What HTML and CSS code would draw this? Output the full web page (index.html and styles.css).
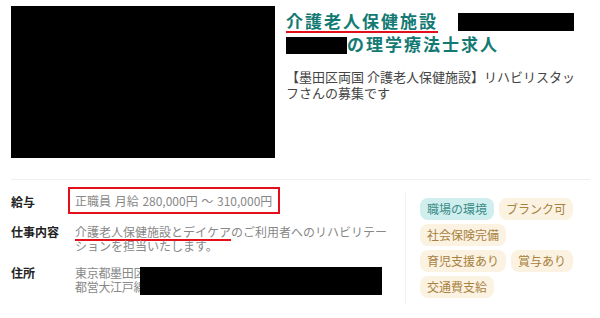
FILE: index.html
```html
<!DOCTYPE html>
<html lang="ja">
<head>
  <meta charset="UTF-8">
  <meta name="viewport" content="width=device-width, initial-scale=1.0">
  <title>介護老人保健施設 理学療法士求人</title>
  <link rel="stylesheet" href="styles.css">
</head>
<body>

<div class="job-card">
  <div class="job-top">
    <div class="job-photo"></div>
    <div class="job-head">
      <h1 class="job-title">
        <span class="mark-red">介護老人保健施設</span><span class="redact redact-a"></span><br><span class="redact redact-b"></span>の理学療法士求人
      </h1>
      <p class="job-lead">【墨田区両国 介護老人保健施設】リハビリスタッフさんの募集です</p>
    </div>
  </div>

  <div class="job-bottom">
    <dl class="spec">
      <dt class="spec-label label-mid">給与</dt>
      <dd class="spec-value"><span class="salary-box">正職員 月給 280,000円 ～ 310,000円</span></dd>

      <dt class="spec-label">仕事内容</dt>
      <dd class="spec-value text-plain job-text"><span class="mark-line">介護老人保健施設とデイケア</span>のご利用者へのリハビリテーションを担当いたします。</dd>

      <dt class="spec-label row-addr">住所</dt>
      <dd class="spec-value text-plain address row-addr">
        <span class="addr-line">東京都墨田区</span>
        <span class="addr-line">都営大江戸線</span>
        <span class="redact redact-addr"></span>
      </dd>
    </dl>

    <div class="tags">
      <span class="tag tag-teal">職場の環境</span>
      <span class="tag">ブランク可</span>
      <span class="tag">社会保険完備</span>
      <span class="tag">育児支援あり</span>
      <span class="tag">賞与あり</span>
      <span class="tag">交通費支給</span>
    </div>
  </div>
</div>

</body>
</html>
```

FILE: styles.css
```css
* {
  margin: 0;
  padding: 0;
  box-sizing: border-box;
}

body {
  font-family: "Noto Sans CJK JP", "Noto Sans", sans-serif;
  background: #fff;
  color: #222;
  padding: 6px 10px 0 11px;
}

.job-top {
  display: flex;
  gap: 11px;
}

.job-photo {
  width: 264px;
  height: 152px;
  background: #000;
  flex-shrink: 0;
}

.job-head {
  flex: 1;
  padding-right: 8px;
}

.job-title {
  margin-top: 3px;
  font-size: 17px;
  line-height: 23px;
  letter-spacing: 2px;
  font-weight: bold;
  color: #127a73;
}

.mark-red {
  text-decoration: underline #e3101c;
  text-decoration-thickness: 2px;
  text-underline-offset: 3px;
}

.redact {
  display: inline-block;
  background: #000;
}

.redact-a {
  width: 116px;
  height: 18px;
  margin-left: 20px;
  vertical-align: -3px;
}

.redact-b {
  width: 61px;
  height: 17px;
  vertical-align: -3px;
}

.job-lead {
  margin-top: 14px;
  font-size: 13px;
  line-height: 16px;
  color: #444;
}

.job-bottom {
  display: flex;
  margin-top: 21px;
  border-top: 1px solid #efefef;
}

.spec {
  flex: 1;
  display: grid;
  grid-template-columns: 57px 1fr;
  align-content: start;
  row-gap: 11px;
  padding-top: 7px;
  margin-right: 14px;
}

.spec-label {
  font-size: 12px;
  font-weight: bold;
  line-height: 14px;
  color: #222;
}

.label-mid {
  align-self: center;
  padding-top: 2px;
}

.spec-value {
  font-size: 12px;
  color: #888;
}

.salary-box {
  display: inline-block;
  border: 2px solid #e3101c;
  padding: 0 6px 0 5px;
  line-height: 23px;
  word-spacing: 1px;
}

.text-plain {
  padding-left: 7px;
}

.job-text {
  line-height: 14px;
}

.mark-line {
  text-decoration: underline #e3101c;
  text-decoration-thickness: 2px;
  text-underline-offset: 2px;
}

.row-addr {
  margin-top: 2px;
}

.address {
  position: relative;
  line-height: 14px;
  letter-spacing: -0.3px;
}

.addr-line {
  display: block;
}

.redact-addr {
  position: absolute;
  left: 72px;
  top: 1px;
  width: 242px;
  height: 28px;
}

.tags {
  width: 185px;
  flex-shrink: 0;
  margin-top: 13px;
  border-left: 1px solid #f2f2f2;
  padding: 5px 0 7px 14px;
  display: flex;
  flex-wrap: wrap;
  align-content: flex-start;
  gap: 4px 5px;
}

.tag {
  display: inline-block;
  font-size: 12px;
  line-height: 22px;
  padding: 0 7px;
  border-radius: 8px;
  background: #fbf2e1;
  color: #a7813f;
}

.tag-teal {
  background: #cfeeed;
  color: #3a8c88;
}
```
